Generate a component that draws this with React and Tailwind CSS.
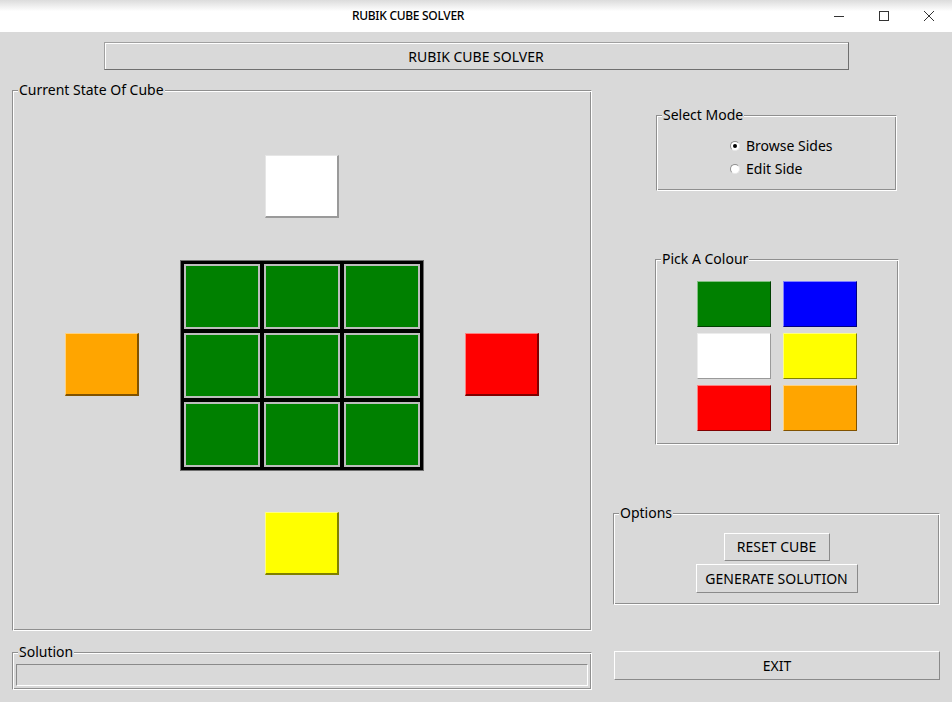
import React, { useState } from 'react';

const FACE = 'w-[74px] h-[63px] border border-t-[#e6e6e6] border-l-[#e6e6e6] border-b-2 border-r-2';

function Frame({ label, className, children }) {
  return (
    <div
      className={`relative border border-t-[#8f8f8f] border-l-[#8f8f8f] border-b-white border-r-white shadow-[inset_1px_1px_0_#ffffff,inset_-1px_-1px_0_#8f8f8f] ${className}`}
    >
      <span className="absolute left-[5px] top-[-9px] px-[1px] bg-[#d9d9d9] leading-[16px]">{label}</span>
      {children}
    </div>
  );
}

function Radio({ checked, label, onClick }) {
  return (
    <div className="flex items-center h-[23px] cursor-default" onClick={onClick}>
      <span className="w-[10px] h-[10px] rounded-full bg-white border border-t-[#8f8f8f] border-l-[#8f8f8f] border-b-[#e8e8e8] border-r-[#e8e8e8] flex items-center justify-center">
        {checked && <span className="w-[4px] h-[4px] rounded-full bg-black" />}
      </span>
      <span className="ml-[6px] leading-[16px]">{label}</span>
    </div>
  );
}

function Button({ className, children }) {
  return (
    <button className={`flex items-center justify-center border border-t-white border-l-white border-b-[#8a8a8a] border-r-[#8a8a8a] bg-[#d9d9d9] leading-[16px] ${className}`}>
      {children}
    </button>
  );
}

const swatches = [
  'bg-[#008000] border-t-[#80c080] border-l-[#80c080] border-b-[#004000] border-r-[#004000]',
  'bg-[#0000ff] border-t-[#8080ff] border-l-[#8080ff] border-b-[#000080] border-r-[#000080]',
  'bg-white border-t-[#ececec] border-l-[#ececec] border-b-[#9a9a9a] border-r-[#9a9a9a]',
  'bg-[#ffff00] border-t-[#ffff80] border-l-[#ffff80] border-b-[#808000] border-r-[#808000]',
  'bg-[#ff0000] border-t-[#ff8080] border-l-[#ff8080] border-b-[#800000] border-r-[#800000]',
  'bg-[#ffa500] border-t-[#ffd280] border-l-[#ffd280] border-b-[#805200] border-r-[#805200]',
];

export default function App() {
  const [mode, setMode] = useState('browse');

  return (
    <div className="w-[952px] h-[702px] flex flex-col bg-[#d9d9d9] text-black text-[14px] font-['Noto_Sans',sans-serif] overflow-hidden">
      {/* title bar */}
      <div className="h-[32px] flex bg-[linear-gradient(to_bottom,#dcdcdc,#ffffff_35%)]">
        <div className="flex-1 flex items-center justify-center text-[12px] font-medium tracking-[-0.3px]">RUBIK CUBE SOLVER</div>
        <div className="w-[45px] flex items-center justify-center">
          <svg width="10" height="10" viewBox="0 0 10 10"><path d="M0 5.5h10" stroke="#333" strokeWidth="1" /></svg>
        </div>
        <div className="w-[45px] flex items-center justify-center">
          <svg width="10" height="10" viewBox="0 0 10 10"><rect x="0.5" y="0.5" width="9" height="9" fill="none" stroke="#333" strokeWidth="1" /></svg>
        </div>
        <div className="w-[46px] flex items-center justify-center">
          <svg width="10" height="10" viewBox="0 0 10 10"><path d="M0 0L10 10M10 0L0 10" stroke="#333" strokeWidth="1" /></svg>
        </div>
      </div>

      <div className="mt-[10px] mx-auto w-[745px] h-[28px] flex items-center justify-center border border-[#a0a0a0] border-b-[#6f6f6f] border-r-[#6f6f6f] shadow-[inset_1px_1px_0_#ffffff]">
        RUBIK CUBE SOLVER
      </div>

      <div className="flex mt-[20px]">
        {/* left column */}
        <div className="ml-[12px] w-[580px] flex flex-col">
          <Frame label="Current State Of Cube" className="h-[541px] flex flex-col items-center pt-[64px]">
            <div className={`${FACE} bg-white border-b-[#9a9a9a] border-r-[#9a9a9a]`} />
            <div className="mt-[42px] flex items-center gap-[41px]">
              <div className={`${FACE} -mt-[2px] bg-[#ffa500] border-t-[#ffd280] border-l-[#ffd280] border-b-[#805200] border-r-[#805200]`} />
              <div className="border border-[#6e6e6e] bg-black p-[3px] grid grid-cols-3 gap-[4px]">
                {Array.from({ length: 9 }).map((_, i) => (
                  <div key={i} className="w-[76px] h-[65px] bg-[#008000] border-2 border-[#bdbdbd]" />
                ))}
              </div>
              <div className={`${FACE} -mt-[2px] bg-[#ff0000] border-t-[#ff8080] border-l-[#ff8080] border-b-[#800000] border-r-[#800000]`} />
            </div>
            <div className={`${FACE} mt-[41px] bg-[#ffff00] border-t-[#ffff80] border-l-[#ffff80] border-b-[#808000] border-r-[#808000]`} />
          </Frame>

          <Frame label="Solution" className="mt-[21px] h-[38px] pt-[11px] px-[3px]">
            <div className="h-[22px] border border-t-[#8a8a8a] border-l-[#8a8a8a] border-b-white border-r-white" />
          </Frame>
        </div>

        {/* right column */}
        <div className="ml-[21px] w-[327px] flex flex-col">
          <Frame label="Select Mode" className="ml-[43px] mt-[25px] w-[241px] h-[76px] pt-[18px] pl-[73px]">
            <Radio checked={mode === 'browse'} label="Browse Sides" onClick={() => setMode('browse')} />
            <Radio checked={mode === 'edit'} label="Edit Side" onClick={() => setMode('edit')} />
          </Frame>

          <Frame label="Pick A Colour" className="ml-[42px] mt-[68px] w-[244px] h-[186px] pt-[21px] flex justify-center">
            <div className="grid grid-cols-2 gap-x-[12px] gap-y-[6px] h-fit">
              {swatches.map((s, i) => (
                <div key={i} className={`w-[74px] h-[46px] border ${s}`} />
              ))}
            </div>
          </Frame>

          <Frame label="Options" className="mt-[68px] w-[327px] h-[92px] pt-[19px] flex flex-col items-center gap-[3px]">
            <Button className="w-[106px] h-[28px]">RESET CUBE</Button>
            <Button className="w-[162px] h-[29px]">GENERATE SOLUTION</Button>
          </Frame>

          <Button className="ml-[1px] mt-[46px] w-[326px] h-[29px]">EXIT</Button>
        </div>
      </div>
    </div>
  );
}
